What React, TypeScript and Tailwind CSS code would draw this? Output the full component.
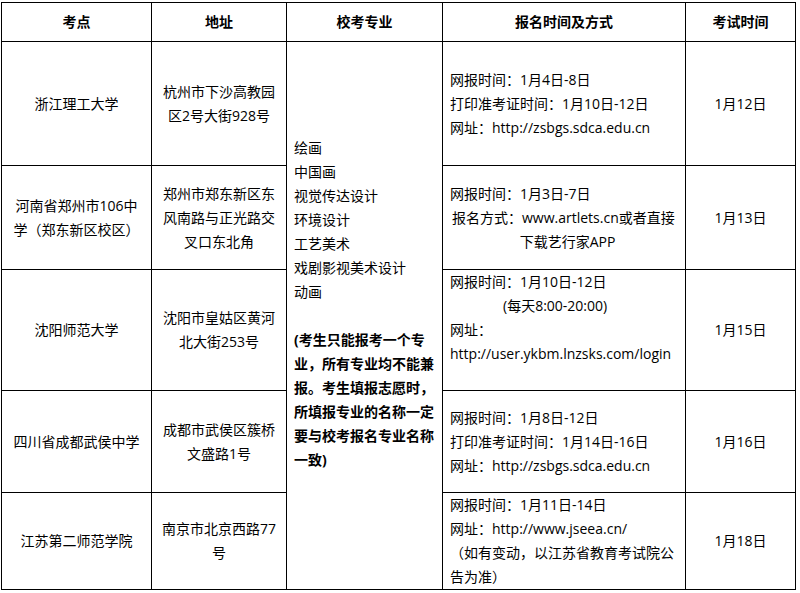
const font = { fontFamily: '"Open Sans", "Noto Sans CJK SC", sans-serif' };

type Row = {
  site: React.ReactNode;
  addr: React.ReactNode;
  signup: React.ReactNode;
  exam: string;
};

const rows: Row[] = [
  {
    site: "浙江理工大学",
    addr: <>杭州市下沙高教园<br />区2号大街928号</>,
    signup: (
      <>
        <div>网报时间：1月4日-8日</div>
        <div>打印准考证时间：1月10日-12日</div>
        <div>网址：http://zsbgs.sdca.edu.cn</div>
      </>
    ),
    exam: "1月12日",
  },
  {
    site: <>河南省郑州市106中<br />学（郑东新区校区）</>,
    addr: <>郑州市郑东新区东<br />风南路与正光路交<br />叉口东北角</>,
    signup: (
      <>
        <div>网报时间：1月3日-7日</div>
        <div className="pl-[2px] whitespace-nowrap">报名方式：www.artlets.cn或者直接</div>
        <div className="text-center">下载艺行家APP</div>
      </>
    ),
    exam: "1月13日",
  },
  {
    site: "沈阳师范大学",
    addr: <>沈阳市皇姑区黄河<br />北大街253号</>,
    signup: (
      <>
        <div>网报时间：1月10日-12日</div>
        <div className="pl-[53px]">(每天8:00-20:00)</div>
        <div>网址：</div>
        <div className="whitespace-nowrap">http://user.ykbm.lnzsks.com/login</div>
        <div>&nbsp;</div>
      </>
    ),
    exam: "1月15日",
  },
  {
    site: "四川省成都武侯中学",
    addr: <>成都市武侯区簇桥<br />文盛路1号</>,
    signup: (
      <>
        <div>网报时间：1月8日-12日</div>
        <div>打印准考证时间：1月14日-16日</div>
        <div>网址：http://zsbgs.sdca.edu.cn</div>
      </>
    ),
    exam: "1月16日",
  },
  {
    site: "江苏第二师范学院",
    addr: <>南京市北京西路77<br />号</>,
    signup: (
      <>
        <div>网报时间：1月11日-14日</div>
        <div>网址：http://www.jseea.cn/</div>
        <div>（如有变动，以江苏省教育考试院公</div>
        <div>告为准）</div>
      </>
    ),
    exam: "1月18日",
  },
];

const majors = ["绘画", "中国画", "视觉传达设计", "环境设计", "工艺美术", "戏剧影视美术设计", "动画"];

export default function App() {
  return (
    <div className="min-h-[593px] w-[800px] bg-white pl-px pt-[2px] text-[14px] leading-[24px] text-black" style={font}>
      <div className="grid w-[795px] grid-cols-[149px_134px_155px_242px_109px] grid-rows-[38px_123px_103px_120px_101px_96px] gap-px bg-black p-px">
        {["考点", "地址", "校考专业", "报名时间及方式", "考试时间"].map(h => (
          <div key={h} className="flex items-center justify-center bg-white font-bold">{h}</div>
        ))}

        {rows.map((r, i) => (
          <Cells key={i} row={r} first={i === 0} />
        ))}
      </div>
    </div>
  );
}

function Cells({ row, first }: { row: Row; first: boolean }) {
  return (
    <>
      <div className="flex items-center justify-center bg-white px-[4px] text-center">
        <div>{row.site}</div>
      </div>
      <div className="flex items-center justify-center bg-white px-[4px] text-center">
        <div>{row.addr}</div>
      </div>
      {first && (
        <div className="row-span-5 flex flex-col justify-center bg-white pl-[7px]">
          {majors.map(m => <div key={m}>{m}</div>)}
          <div>&nbsp;</div>
          <div className="font-bold">
            <div>(考生只能报考一个专</div>
            <div>业，所有专业均不能兼</div>
            <div>报。考生填报志愿时，</div>
            <div>所填报专业的名称一定</div>
            <div>要与校考报名专业名称</div>
            <div>一致)</div>
          </div>
          <div>&nbsp;</div>
        </div>
      )}
      <div className="flex flex-col justify-center bg-white pl-[7px]">{row.signup}</div>
      <div className="flex items-center justify-center bg-white">{row.exam}</div>
    </>
  );
}
